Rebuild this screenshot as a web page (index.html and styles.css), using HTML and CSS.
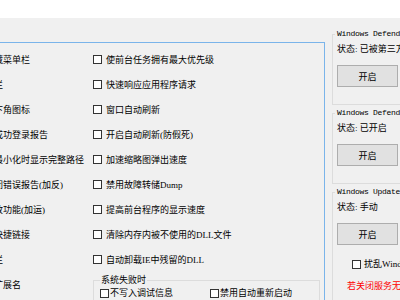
FILE: index.html
```html
<!DOCTYPE html>
<html>
<head>
<meta charset="utf-8">
<link rel="stylesheet" href="styles.css">
</head>
<body>
<div class="top"></div>
<div class="main">
  <div class="tabwrap">
    <div class="panel">
      <div class="cols">
        <div class="col">
          <div class="row"><span class="cb"></span><span>藏菜单栏</span></div>
          <div class="row"><span class="cb"></span><span>栏</span></div>
          <div class="row"><span class="cb"></span><span>下角图标</span></div>
          <div class="row"><span class="cb"></span><span>成功登录报告</span></div>
          <div class="row"><span class="cb"></span><span>最小化时显示完整路径</span></div>
          <div class="row"><span class="cb"></span><span>闭错误报告(加反)</span></div>
          <div class="row"><span class="cb"></span><span>放功能(加运)</span></div>
          <div class="row"><span class="cb"></span><span>快捷链接</span></div>
          <div class="row"><span class="cb"></span><span>栏</span></div>
          <div class="row"><span class="cb"></span><span>扩展名</span></div>
        </div>
        <div class="col">
          <div class="row"><span class="cb"></span><span>使前台任务拥有最大优先级</span></div>
          <div class="row"><span class="cb"></span><span>快速响应应用程序请求</span></div>
          <div class="row"><span class="cb"></span><span>窗口自动刷新</span></div>
          <div class="row"><span class="cb"></span><span>开启自动刷新(防假死)</span></div>
          <div class="row"><span class="cb"></span><span>加速缩略图弹出速度</span></div>
          <div class="row"><span class="cb"></span><span>禁用故障转储Dump</span></div>
          <div class="row"><span class="cb"></span><span>提高前台程序的显示速度</span></div>
          <div class="row"><span class="cb"></span><span>清除内存内被不使用的DLL文件</span></div>
          <div class="row"><span class="cb"></span><span>自动卸载IE中残留的DLL</span></div>
          <fieldset class="fail">
            <legend>系统失败时</legend>
            <div class="fail-row">
              <div class="opt"><span class="cb"></span><span>不写入调试信息</span></div>
              <div class="opt"><span class="cb"></span><span>禁用自动重新启动</span></div>
            </div>
          </fieldset>
        </div>
      </div>
    </div>
  </div>
  <div class="side">
    <fieldset class="svc">
      <legend>Windows Defender</legend>
      <div class="status">状态: 已被第三方接管</div>
      <button class="btn">开启</button>
    </fieldset>
    <fieldset class="svc">
      <legend>Windows Defender</legend>
      <div class="status">状态: 已开启</div>
      <button class="btn">开启</button>
    </fieldset>
    <fieldset class="svc">
      <legend>Windows Update</legend>
      <div class="status">状态: 手动</div>
      <button class="btn">开启</button>
      <div class="extra"><span class="cb"></span><span>扰乱Windows更新</span></div>
      <div class="warn">若关闭服务无效请重启</div>
    </fieldset>
  </div>
</div>
</body>
</html>
```

FILE: styles.css
```css
html, body {
  margin: 0;
  width: 400px;
  height: 300px;
  overflow: hidden;
}
body {
  background: #f0f0f0;
  font-family: "Liberation Serif", "Noto Sans CJK SC", serif;
  font-size: 9px;
  line-height: 12px;
  color: #000;
}
.top {
  height: 18px;
  background: #fff;
}
.main {
  display: flex;
  height: 282px;
}
.tabwrap {
  flex: none;
  width: 325px;
  padding-top: 24px;
  box-sizing: border-box;
}
.panel {
  height: 100%;
  box-sizing: border-box;
  border-top: 1px solid #7ab4ea;
  border-right: 1px solid #7ab4ea;
}
.cols {
  display: grid;
  grid-template-columns: 112px 231px;
  margin-left: -19px;
  padding-top: 4px;
}
.row {
  height: 25px;
  display: flex;
  align-items: center;
  gap: 4px;
  white-space: nowrap;
}
.cb {
  flex: none;
  display: inline-block;
  width: 9px;
  height: 9px;
  box-sizing: border-box;
  border: 1px solid #333;
  background: #fff;
}
.fail {
  margin: 3px 0 0;
  width: 227px;
  box-sizing: border-box;
  border: 1px solid #dcdcdc;
  padding: 0 0 4px 6px;
  min-inline-size: 0;
}
.fail legend {
  padding: 0 1px;
  line-height: 10px;
}
.fail-row {
  display: grid;
  grid-template-columns: 110px 110px;
  margin-top: 2px;
}
.opt {
  display: flex;
  align-items: center;
  gap: 1px;
  height: 12px;
  white-space: nowrap;
}
.side {
  flex: none;
  width: 110px;
  padding: 11px 0 0 7px;
  box-sizing: border-box;
}
.svc {
  margin: 0;
  padding: 0 0 17px 4px;
  border: 1px solid #dcdcdc;
  min-inline-size: 0;
}
.svc + .svc {
  margin-top: 3px;
}
.svc legend {
  font-family: "Liberation Mono", monospace;
  font-size: 8px;
  line-height: 10px;
  letter-spacing: -0.3px;
  padding: 0 2px;
  margin-left: -2px;
  white-space: nowrap;
}
.status {
  margin-top: 4px;
  white-space: nowrap;
}
.btn {
  display: block;
  margin-top: 10px;
  width: 61px;
  height: 22px;
  padding: 0;
  border: 1px solid #adadad;
  background: #e1e1e1;
  font-family: "Liberation Serif", "Noto Sans CJK SC", serif;
  font-size: 9px;
  color: #000;
}
.extra {
  display: flex;
  align-items: center;
  gap: 3px;
  margin: 13px 0 0 15px;
  white-space: nowrap;
}
.warn {
  color: #f00;
  margin: 10px 0 0 10px;
  white-space: nowrap;
}
```
